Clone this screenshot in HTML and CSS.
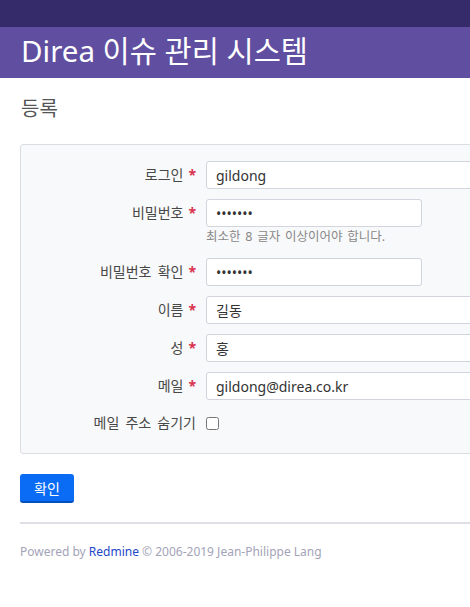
FILE: index.html
```html
<!DOCTYPE html>
<html lang="ko">
<head>
<meta charset="utf-8">
<title>Direa 이슈 관리 시스템</title>
<link rel="stylesheet" href="styles.css">
</head>
<body>
<div class="top-menu"></div>
<div class="header"><h1 class="site-title">Direa 이슈 관리 시스템</h1></div>
<div class="content">
  <h2 class="page-title">등록</h2>
  <div class="box">
    <div class="row">
      <label class="label">로그인<span class="req">*</span></label>
      <input class="field wide" type="text" value="gildong">
    </div>
    <div class="row">
      <label class="label">비밀번호<span class="req">*</span></label>
      <div class="col">
        <input class="field short" type="password" value="1234567">
        <div class="hint">최소한 8 글자 이상이어야 합니다.</div>
      </div>
    </div>
    <div class="row">
      <label class="label">비밀번호 확인<span class="req">*</span></label>
      <input class="field short" type="password" value="1234567">
    </div>
    <div class="row">
      <label class="label">이름<span class="req">*</span></label>
      <input class="field wide" type="text" value="길동">
    </div>
    <div class="row">
      <label class="label">성<span class="req">*</span></label>
      <input class="field wide" type="text" value="홍">
    </div>
    <div class="row">
      <label class="label">메일<span class="req">*</span></label>
      <input class="field wide" type="text" value="gildong@direa.co.kr">
    </div>
    <div class="row check-row">
      <label class="label">메일 주소 숨기기</label>
      <input class="check" type="checkbox">
    </div>
  </div>
  <button class="btn" type="button">확인</button>
  <div class="footer">Powered by <a class="link" href="#">Redmine</a> © 2006-2019 Jean-Philippe Lang</div>
</div>
</body>
</html>
```
FILE: styles.css
```css
html, body {
  margin: 0;
  padding: 0;
  background: #fff;
  font-family: "Noto Sans", "Noto Sans CJK KR", sans-serif;
  color: #333;
  overflow: hidden;
}
.top-menu {
  height: 27px;
  background: #352a6a;
}
.header {
  height: 51px;
  background: #604fa1;
  display: flex;
  align-items: center;
  padding-left: 21px;
}
.site-title {
  margin: 0;
  font-weight: normal;
  font-size: 29.5px;
  line-height: 34px;
  color: #fff;
  white-space: nowrap;
  position: relative;
  top: -2px;
}
.content {
  padding: 0 0 0 20px;
  width: 520px;
}
.page-title {
  margin: 18px 0 0 1px;
  font-weight: normal;
  font-size: 20px;
  line-height: 26px;
  color: #555;
}
.box {
  margin-top: 22px;
  background: #f8f9fb;
  border: 1px solid #dcdde3;
  border-radius: 3px;
  padding: 16px 0 20px 0;
  display: flex;
  flex-direction: column;
  gap: 10px;
}
.row {
  display: flex;
  align-items: flex-start;
}
.label {
  width: 175px;
  flex: none;
  text-align: right;
  font-size: 14px;
  line-height: 28px;
  color: #484848;
  margin-right: 10px;
  white-space: nowrap;
  word-spacing: 2.5px;
}
.req {
  color: #d9334d;
  font-weight: bold;
  margin-left: 5px;
}
.col {
  display: flex;
  flex-direction: column;
}
.field {
  box-sizing: border-box;
  height: 28px;
  border: 1px solid #d2d4de;
  border-radius: 3px;
  background: #fff;
  font-family: "Noto Sans", "Noto Sans CJK KR", sans-serif;
  font-size: 14px;
  color: #333;
  padding: 0 9px;
  margin: 0;
  outline: none;
}
.wide {
  width: 400px;
}
.short {
  width: 216px;
}
.hint {
  font-size: 12.5px;
  line-height: 18px;
  color: #888;
  margin-top: 1px;
  margin-bottom: 2px;
  white-space: nowrap;
  word-spacing: 1.5px;
}
.check-row {
  align-items: center;
  margin-top: 3px;
}
.check-row .label {
  line-height: 20px;
}
.check {
  width: 13px;
  height: 13px;
  margin: 0;
}
.btn {
  margin-top: 20px;
  height: 29px;
  width: 54px;
  background: #0a6cf5;
  border: none;
  border-bottom: 2px solid #0050c0;
  border-radius: 3px;
  color: #fff;
  font-family: "Noto Sans", "Noto Sans CJK KR", sans-serif;
  font-size: 14px;
  padding: 0;
  display: block;
}
.footer {
  margin-top: 19px;
  border-top: 2px solid #dfdfe8;
  padding-top: 19px;
  font-size: 12px;
  line-height: 18px;
  color: #a3a3b8;
  white-space: nowrap;
}
.link {
  color: #2448c8;
  text-decoration: none;
}
```
